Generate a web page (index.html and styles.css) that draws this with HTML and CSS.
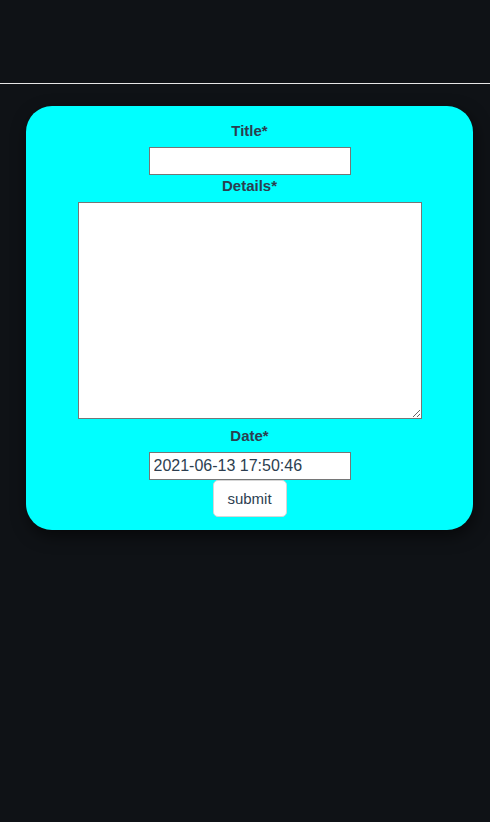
FILE: index.html
```html
<!DOCTYPE html>
<html>
<head>
<meta charset="utf-8">
<link rel="stylesheet" href="styles.css">
</head>
<body>
<header class="top"></header>
<div class="rule"></div>
<main class="wrap">
  <form class="card">
    <label class="lbl" for="t">Title*</label>
    <input id="t" class="field title-field" type="text">
    <label class="lbl" for="d">Details*</label>
    <textarea id="d" class="area"></textarea>
    <label class="lbl" for="dt">Date*</label>
    <input id="dt" class="field" type="text" value="2021-06-13 17:50:46">
    <button type="button" class="btn">submit</button>
  </form>
</main>
</body>
</html>
```
FILE: styles.css
```css
html, body {
  margin: 0;
  padding: 0;
  background: #0f1216;
  height: 100%;
}
body {
  font-family: "Liberation Sans", Arial, sans-serif;
  color: #2c3e50;
}
.top {
  height: 83px;
}
.rule {
  height: 1px;
  background: #e6e6e6;
}
.wrap {
  padding: 22px 17px 0 26px;
}
.card {
  background: #00ffff;
  border-radius: 26px;
  box-shadow: 2px 6px 16px rgba(0, 0, 0, 0.55);
  display: flex;
  flex-direction: column;
  align-items: center;
  padding: 15px 0 13px;
}
.lbl {
  display: block;
  font-weight: bold;
  font-size: 15px;
  line-height: 18px;
  padding-top: 1px;
  margin-bottom: 7px;
}
.field {
  box-sizing: border-box;
  width: 202px;
  height: 28px;
  border: 1px solid #767676;
  border-radius: 0;
  padding: 0 4px;
  margin: 0;
  font-family: "Liberation Sans", Arial, sans-serif;
  font-size: 16px;
  color: #2c3e50;
  background: #fff;
}
.title-field {
  margin-bottom: 1px;
}
.area {
  box-sizing: border-box;
  width: 344px;
  height: 217px;
  border: 1px solid #767676;
  margin: 0 0 7px;
  padding: 2px;
  background: #fff;
  resize: both;
}
.btn {
  box-sizing: border-box;
  width: 74px;
  height: 37px;
  background: #fff;
  border: 1px solid #d6d6d6;
  border-radius: 5px;
  font-family: "Liberation Sans", Arial, sans-serif;
  font-size: 15px;
  color: #2c3e50;
  padding: 0;
  margin: 0;
}
```
